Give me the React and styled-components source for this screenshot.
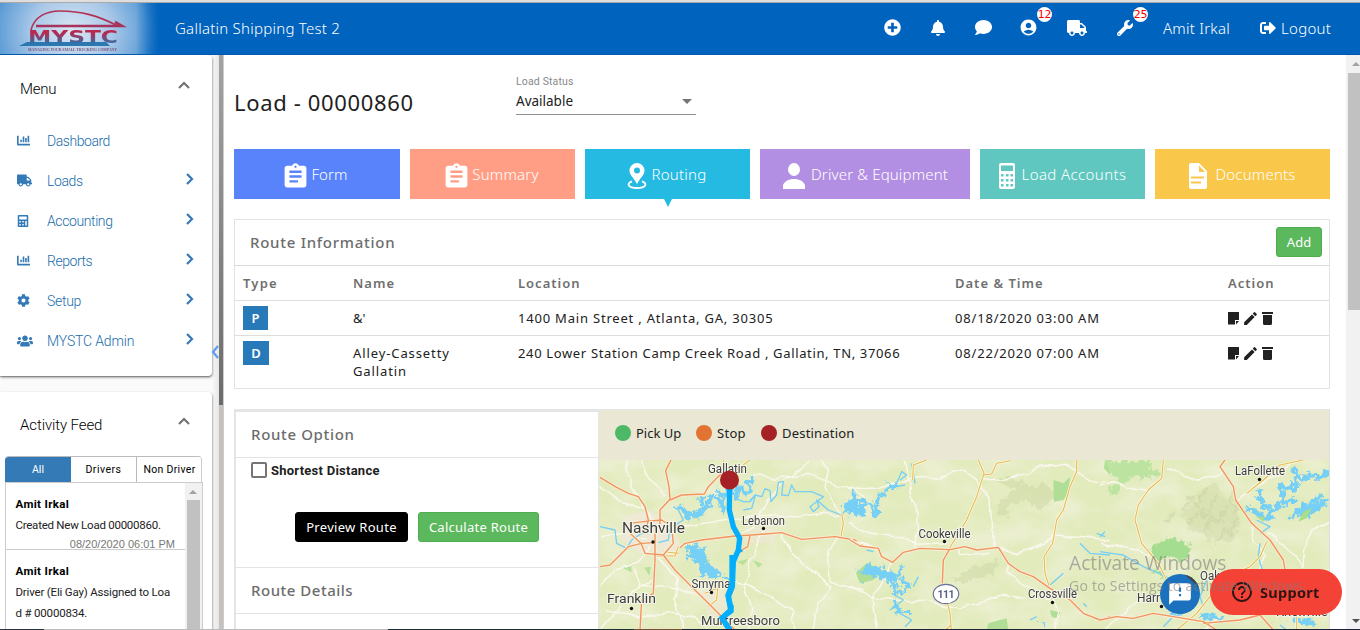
import React from 'react';
import styled, { createGlobalStyle } from 'styled-components';
import {
  FaPlusCircle, FaBell, FaComment, FaTruck, FaWrench, FaSignOutAlt,
  FaChartBar, FaCalculator, FaCog, FaUsers,
} from 'react-icons/fa';
import { MdAccountCircle, MdAssignment, MdEdit, MdFeedback, MdHelpOutline } from 'react-icons/md';

const Global = createGlobalStyle`
  * { box-sizing: border-box; }
  body { margin: 0; background: #fff; overflow: hidden; }
  button { margin: 0; padding: 0; font: inherit; }
`;
const ui = `'Noto Sans', 'DejaVu Sans', sans-serif`;
const side = `Roboto, 'Liberation Sans', sans-serif`;

const Page = styled.div`
  position: relative; width: 1360px; height: 630px; overflow: hidden;
  display: flex; flex-direction: column; background: #fff;
  font-family: ${ui}; color: #212121;
`;
const Label = styled.span`
  white-space: pre; letter-spacing: ${p => p.$ls || 0}px;
`;

/* header */
const TopEdge = styled.div`height: 3px; flex: none; background: #dedede; border-bottom: 1px solid #a9a9a9;`;
const Header = styled.header`
  height: 52px; flex: none; background: #0063bd; color: #fff;
  border-bottom: 1px solid #0058ab;
  display: flex; align-items: center; font-size: 15px; font-weight: 300; padding-bottom: 1px;
`;
const LogoBox = styled.div`
  width: 160px; height: 51px; flex: none; margin-bottom: -1px;
  background: radial-gradient(ellipse 100px 90px at 72px 28px, #d9e6f4 0%, #a9c8e8 40%, #5e9dd6 75%, #0063bd 100%);
  -webkit-mask-image: linear-gradient(90deg, #000 85%, transparent);
`;
const Company = styled.div`margin-left: 15px; width: 709px;`;
const HeadIcon = styled.div`
  position: relative; width: ${p => p.$w}px; height: 18px; display: flex; align-items: center; color: #fff;
  margin-left: ${p => p.$ml || 0}px; padding-bottom: 1px;
`;
const Badge = styled.span`
  position: absolute; left: ${p => p.$x}px; top: -12px; width: 15px; height: 15px; border-radius: 50%;
  background: #fff; color: #f00; font: 11px/15px 'DejaVu Sans', sans-serif;
  display: flex; justify-content: center; letter-spacing: -0.2px;
`;
const UserName = styled.div`width: 97px;`;
const Logout = styled.div`display: flex; align-items: center; gap: 5px;`;

/* body */
const Body = styled.div`display: flex; height: 575px; flex: none;`;
const Sidebar = styled.aside`
  width: 219px; display: flex; flex-direction: column; gap: 16px; background: linear-gradient(90deg, #fafafa 0 212px, #e6e6e6);
  font-family: ${side}; overflow: hidden; position: relative;
`;
const Card = styled.section`
  width: 212px; height: ${p => p.$h}px; flex: none; background: #fff; border-radius: 0 4px 4px 0;
  box-shadow: 0 1px 2px rgba(0,0,0,.5), 1px 2px 3px rgba(0,0,0,.15);
`;
const CardHead = styled.div`
  display: flex; justify-content: space-between; align-items: center; height: 66px; padding: 1px 22px ${p => p.$pb || 0}px 20px;
  font-size: 15px; font-weight: 300; color: #000;
`;
const Chevron = styled.svg`
  width: ${p => p.$w}px; height: ${p => p.$h}px; fill: none; stroke: ${p => p.$c}; stroke-width: ${p => p.$s || 2};
  margin-top: ${p => p.$mt || 0}px;
`;
const MenuItem = styled.div`
  display: flex; align-items: center; height: 40px; padding: 0 18px 1px 17px; color: #337ab7; font-size: 14px;
`;
const MenuIcon = styled.span`width: 30px; display: flex; font-size: ${p => p.$s}px;`;
const MenuText = styled.span`flex: 1; font-weight: 300; color: #206cab;`;
const SideThumb = styled.div`
  width: 5px; flex: none; border-right: 1px solid #ccc;
  background: linear-gradient(#a3a3a3, #6b6b6b 350px, #c4c1bf 350px);
`;
const Collapse = styled.div`position: absolute; left: 211px; top: 290px; height: 14px; display: flex;`;
const SegRow = styled.div`
  display: grid; grid-template-columns: 66px 66px 65px; margin: -2px 0 0 5px; width: 197px; height: 26px;
  border-radius: 4px 4px 0 0; border-top: 1px solid #bbb; border-right: 1px solid #ccc; overflow: hidden;
`;
const Seg = styled.div`
  display: flex; align-items: center; justify-content: center; font-size: 10.5px; color: ${p => (p.$on ? '#fff' : '#000')};
  background: ${p => (p.$on ? '#337ab7' : '#fff')}; border-right: ${p => (p.$bar ? '1px solid #bbb' : '0')};
`;
const Feed = styled.div`
  display: flex; margin-left: 5px; width: 198px; height: 150px; border: 1px solid #ccc; border-bottom: 0;
`;
const FeedList = styled.div`flex: 1;`;
const FeedEntry = styled.div`
  height: ${p => p.$h}px; border-bottom: 1px solid #ccc; padding: 11px 10px 0 9.5px; font-size: 11.5px; line-height: 21px; color: #222;
`;
const FeedName = styled.div`font-weight: 700; color: #000; font-size: 11.5px;`;
const FeedDate = styled.div`
  text-align: right; color: #777; font: 11px/17px 'Liberation Sans', sans-serif;
`;
const FeedBar = styled.div`
  width: 17px; padding-right: 1px; background: #f1f1f1; display: flex; flex-direction: column; align-items: center;
`;
const ArrowSlot = styled.div`height: ${p => p.$h}px; display: flex; align-items: center; justify-content: center;`;
const Triangle = styled.i`
  border: 4px solid transparent; border-top-width: ${p => (p.$down ? 4 : 0)}px; border-bottom-width: ${p => (p.$down ? 0 : 4)}px;
  border-${p => (p.$down ? 'top' : 'bottom')}-color: ${p => p.$c};
`;
const Thumb = styled.div`width: ${p => p.$w}px; height: ${p => p.$h}px; background: #c1c1c1;`;

const Main = styled.main`flex: 1; padding: 0 16px 0 10px; height: 575px; overflow: hidden;`;
const TitleRow = styled.div`display: flex; height: 94px;`;
const Title = styled.h1`margin: 31px 0 0; width: 282px; font-size: 22px; font-weight: 400; line-height: 32px;`;
const Select = styled.div`width: 180px; height: 60px; border-bottom: 1px solid #8f8f8f; padding-top: 20px;`;
const SelectLabel = styled.div`font: 10.5px/14px 'Roboto', sans-serif; color: #888;`;
const SelectValue = styled.div`
  display: flex; justify-content: space-between; align-items: center; padding-right: 4px; font-size: 13.5px; line-height: 24px;
`;
const Caret = styled.i`border: 5px solid transparent; border-top-color: #757575; border-bottom: 0;`;
const Tabs = styled.nav`
  display: grid; grid-template-columns: 166px 165px 165px 210px 165px 175px; gap: 10px; height: 50px;
`;
const Tab = styled.div`
  position: relative; background: ${p => p.$bg}; color: #fff; display: flex; justify-content: center; align-items: center;
  font-size: 15px; font-weight: 300; gap: ${p => p.$gap || 4}px; padding: 0 ${p => p.$pr || 0}px 0 0;
`;
const TabArrow = styled.i`
  position: absolute; top: 50px; left: 79px; border: 4px solid transparent; border-top: 8px solid #24bae2; border-bottom: 0;
`;
const TabIcon = styled.svg`width: ${p => p.$w}px; height: 26px; fill: #fff; margin-top: 4px;`;
const FormIcon = styled(MdAssignment)`width: 29px; height: 29px; margin: 4px -3px 0 0;`;

const Panel = styled.section`margin-top: 20px; border: 1px solid #e2e2e2; height: 170px;`;
const PanelHead = styled.div`
  height: ${p => p.$h}px; display: flex; align-items: center; justify-content: space-between;
  padding: 0 7px 2px 15px; border-bottom: 1px solid ${p => p.$line || '#d9d9d9'};
  font-size: 15px; font-weight: 500; color: #6d6d6d;
`;
const Button = styled.button`
  height: 30px; width: ${p => p.$w}px; border-radius: 3px; border: 1px solid ${p => (p.$dark ? '#000' : '#4cae4c')};
  background: ${p => (p.$dark ? '#000' : '#5cb85c')}; color: #fff; font: 400 13px ${ui};
`;
const Row = styled.div`
  display: grid; grid-template-columns: 110px 165px 437px 273px 1fr; padding: ${p => (p.$head ? 8 : 5)}px 8px 0;
  height: ${p => p.$h}px; border-bottom: ${p => (p.$last ? 0 : '1px solid #ddd')};
  font-size: 13px; line-height: ${p => (p.$head ? 18 : 24)}px; font-weight: ${p => (p.$head ? 600 : 400)};
  color: ${p => (p.$head ? '#6f6f6f' : '#212121')};
`;
const TypeMark = styled.span`
  display: flex; align-items: center; justify-content: center; width: ${p => p.$w}px; height: 24px;
  background: #2779b7; color: #fff; font-weight: 600; font-size: 13px;
`;
const Name = styled.div`line-height: 18px; padding-top: 3px;`;
const Actions = styled.div`display: flex; align-items: center; height: 25px; gap: 3px;`;
const Pencil = styled(MdEdit)`width: 17px; height: 17px; margin: 0 0 0 -1px;`;

const Lower = styled.section`display: flex; margin-top: 20px; height: 221px;`;
const Options = styled.div`width: 365px; border-top: 3px solid #e5e5e5; border-left: 2px solid #e5e5e5; border-right: 1px solid #e5e5e5;`;
const OptionBody = styled.div`height: 110px; border-bottom: 1px solid #e3e3e3; padding: 2px 15px 0;`;
const CheckRow = styled.div`display: flex; align-items: center; gap: 4px; height: 20px; font: 700 13px ${side};`;
const CheckBox = styled.span`width: 16px; height: 16px; border: 2px solid #757575; border-radius: 2px;`;
const ButtonRow = styled.div`display: flex; gap: 10px; margin: 32px 0 0 44px;`;
const MapPane = styled.div`width: 731px; border-right: 1px solid #ddd; border-top: 1px solid #e5e5e5;`;
const Legend = styled.div`
  height: 50px; background: #eae8d5; display: flex; align-items: center; padding: 0 0 4px 16px; font-size: 13px; 
`;
const LegendItem = styled.div`display: flex; align-items: center; gap: 5px; width: ${p => p.$w}px;`;
const Dot = styled.i`width: 16px; height: 16px; border-radius: 50%; background: ${p => p.$c};`;
const MapSvg = styled.svg`display: block; width: 730px; height: 170px;`;
const PageBar = styled.div`
  width: 14px; background: #f1f1f1; display: flex; flex-direction: column; align-items: flex-end; justify-content: flex-start;
`;
const PageBarGap = styled.div`flex: 1;`;

/* floating parts */
const ChatButton = styled.div`
  position: absolute; left: 1160px; top: 574px; width: 40px; height: 40px; border-radius: 50%;
  background: #1b71bd; color: #fff; display: flex; align-items: center; justify-content: center; font-size: 26px; overflow: hidden;
`;
const ChatRibbon = styled.i`
  position: absolute; left: 21px; top: 1px; width: 24px; height: 6px; background: #444; transform: rotate(42deg);
`;
const Support = styled.div`
  position: absolute; left: 1210px; top: 569px; width: 132px; height: 46px; border-radius: 23px; background: #f44336;
  color: #301413; display: flex; align-items: center; padding-left: 20px; gap: 6px; font-size: 14.5px; font-weight: 700;
`;
const Watermark = styled.div`
  position: absolute; left: 1069px; top: 549px; color: rgba(125,125,125,.6); font-family: 'Open Sans', sans-serif;
  font-size: 14px; line-height: 20px; white-space: nowrap;
`;
const WatermarkTitle = styled.div`font-size: 19.2px; line-height: 27px;`;
const BottomEdge = styled.div`
  position: absolute; left: 0; top: 629px; width: 1360px; height: 1px;
  background: linear-gradient(90deg, #2b3540 44px, #bbb 44px 388px, #1b2f35 388px 634px, #77503a 634px 682px, #1c2338 682px);
`;

const Logo = () => (
  <svg width="135" height="51" viewBox="0 3 135 51">
    <path d="M31 30C34 17 46 11 60 11C82 11 98 16 116 25" fill="none" stroke="#b03355" strokeWidth="1.6" />
    <path d="M36 26H122L115 22" fill="none" stroke="#a5335b" strokeWidth="2.6" />
    <path d="M19 46L27 42H106L110 46H19Z" fill="#2a78ad" />
    <text x="28" y="43" fontFamily="DejaVu Sans" fontWeight="700" fontSize="18" textLength="90" lengthAdjust="spacingAndGlyphs" fill="url(#lg)">MYSTC</text>
    <text x="28" y="51" fontFamily="Liberation Serif" fontWeight="700" fontSize="4.5" textLength="89" lengthAdjust="spacingAndGlyphs" fill="#7a5074">MANAGING YOUR SMALL TRUCKING COMPANY</text>
    <defs><linearGradient id="lg" x1="0" y1="0" x2="0" y2="1"><stop offset=".35" stopColor="#b52b50" /><stop offset=".85" stopColor="#2b72ab" /></linearGradient></defs>
  </svg>
);

const Up = () => (
  <Chevron $w={12} $h={8} $c="#6f6f6f" $mt={-8} viewBox="0 0 12 8"><path d="M1 7L6 2L11 7" /></Chevron>
);
const menu = [
  ['Dashboard', FaChartBar, 13, false, -0.45],
  ['Loads', FaTruck, 15, true, -0.4],
  ['Accounting', FaCalculator, 12, true, -0.4],
  ['Reports', FaChartBar, 13, true, -0.45],
  ['Setup', FaCog, 13, true, -0.3],
  ['MYSTC Admin', FaUsers, 16, true, -0.15],
];
const MenuCard = () => (
  <Card $h={321}>
    <CardHead><Label $ls={-0.25}>Menu</Label><Up /></CardHead>
    {menu.map(([t, Icon, s, more, ls]) => (
      <MenuItem key={t}>
        <MenuIcon $s={s}><Icon /></MenuIcon>
        <MenuText><Label $ls={ls}>{t}</Label></MenuText>
        {more && <Chevron $w={8} $h={12} $c="#337ab7" $s={2.2} $mt={-4} viewBox="0 0 8 12"><path d="M1 1L6 6L1 11" /></Chevron>}
      </MenuItem>
    ))}
  </Card>
);
const ActivityCard = () => (
  <Card $h={260}>
    <CardHead $pb={2}><Label $ls={-0.1}>Activity Feed</Label><Up /></CardHead>
    <SegRow>
      <Seg $on>All</Seg><Seg $bar><Label $ls={0.5}>Drivers</Label></Seg><Seg><Label $ls={0.3}>Non Driver</Label></Seg>
    </SegRow>
    <Feed>
      <FeedList>
        <FeedEntry $h={67}>
          <FeedName><Label $ls={0.35}>Amit Irkal</Label></FeedName>
          <div><Label $ls={-0.25}>Created New Load 00000860.</Label></div>
          <FeedDate>08/20/2020 06:01 PM</FeedDate>
        </FeedEntry>
        <FeedEntry $h={90}>
          <FeedName><Label $ls={0.35}>Amit Irkal</Label></FeedName>
          <Label $ls={-0.18}>{'Driver (Eli Gay) Assigned to Loa\nd # 00000834.'}</Label>
        </FeedEntry>
      </FeedList>
      <FeedBar><ArrowSlot $h={17}><Triangle $c="#a3a3a3" /></ArrowSlot><Thumb $w={13} $h={130} /></FeedBar>
    </Feed>
  </Card>
);

const PinIcon = () => (
  <TabIcon $w={20} viewBox="0 0 20 26"><path fillRule="evenodd" d="M10 0A7.5 7.5 0 0 0 2.5 7.5C2.5 12 7 15 10 21C13 15 17.5 12 17.5 7.5A7.5 7.5 0 0 0 10 0ZM10 4.5A3 3 0 1 1 10 10.5A3 3 0 0 1 10 4.5Z" /><path d="M5 18.3C-1 20.5 1 25 10 25S21 20.5 15 18.3" fill="none" stroke="#fff" strokeWidth="1.8" /></TabIcon>
);
const PersonIcon = () => (
  <TabIcon $w={26} viewBox="0 0 26 26"><ellipse cx="13" cy="6.5" rx="6" ry="6.5" /><path d="M2 26V22C4 17.5 9 16 13 16S22 17.5 24 22V26Z" /></TabIcon>
);
const CalcIcon = () => (
  <TabIcon $w={17} viewBox="0 0 17 26"><path fillRule="evenodd" d="M2 0H14A2 2 0 0 1 16 2V24A2 2 0 0 1 14 26H2A2 2 0 0 1 0 24V2A2 2 0 0 1 2 0ZM2 2.5V8H14V2.5ZM2 11V13.5H4.5V11ZM7 11V13.5H9.5V11ZM11.5 11V13.5H14V11ZM2 16V18.5H4.5V16ZM7 16V18.5H9.5V16ZM11.5 16V18.5H14V16ZM2 21V23.5H4.5V21ZM7 21V23.5H9.5V21ZM11.5 21V23.5H14V21Z" /></TabIcon>
);
const DocIcon = () => (
  <TabIcon $w={20} viewBox="0 0 20 26"><path fillRule="evenodd" d="M3 0H10L18 8V24A2 2 0 0 1 16 26H2A2 2 0 0 1 0 24V2A2 2 0 0 1 2 0ZM10 2.500V9H16ZM2 13.500V15.500H15V13.500ZM2 18.500V20.500H12V18.500Z" /></TabIcon>
);
const NoteIcon = () => (
  <svg width="12" height="13" viewBox="0 0 12 13" fill="#212121"><path d="M0 0H11V8H7V12.5H0Z" /><path d="M8 9H11L8 12.5Z" /></svg>
);
const TrashIcon = () => (
  <svg width="11" height="13" viewBox="0 0 11 13" fill="#212121"><path d="M0 0H11V2H0ZM1 3H10V11.5A1.5 1.5 0 0 1 8.5 13H2.5A1.5 1.5 0 0 1 1 11.5Z" /></svg>
);
const RowActions = () => (<Actions><NoteIcon /><Pencil /><TrashIcon /></Actions>);

const Roads = ({ c, w, d, o }) => (
  <g fill="none" stroke={c} strokeWidth={w} opacity={o || 1} strokeLinejoin="round">{d.map((x, i) => <path key={i} d={x} />)}</g>
);
const White = ({ d }) => <g filter="url(#wobble)"><Roads c="#faf7ee" w={4.5} d={d} /></g>;
const Yellow = ({ d }) => (<><Roads c="#fdf6dd" w={8} d={d} /><Roads c="#e3bb55" w={3.2} d={d} /></>);
const Orange = ({ d }) => (<><Roads c="#fbeedb" w={9} d={d} /><Roads c="#ee965c" w={4.2} d={d} /></>);
const Water = ({ d, w }) => <Roads c="#76cff4" w={w || 4} d={d} />;
const Lakes = styled.g.attrs({ filter: 'url(#shore)' })``;
const Place = ({ x, y, w, s, children, dot }) => (
  <>
    <text x={x} y={y} fontFamily="Roboto" fontSize={s || 12} textLength={w} lengthAdjust="spacingAndGlyphs"
      fill="#3d3d3d" stroke="#f5f5ea" strokeWidth="2" paintOrder="stroke">{children}</text>
    {dot && <circle cx={dot[0]} cy={dot[1]} r="1.7" fill="#111" />}
  </>
);
const West = () => (
  <g transform="translate(595 400) scale(.333333)">
    <path d="M90 350L160 330L230 370L260 440L210 470L130 460L80 420Z" fill="#f0e8da" opacity=".8" />
    <path d="M320 570L380 560L400 640L340 660Z M450 380H540V430H450Z" fill="#f0e8da" opacity=".6" />
    <path d="M85 505L108 488L110 517Z M148 503L168 500L163 527Z M322 475L345 480L335 495Z M425 485L460 477L445 495Z M474 480L502 492L490 503Z" fill="#b7e09a" />
    <White d={[
      'M15 260L70 300L150 330', 'M90 180L110 260L140 320L170 360', 'M135 180L160 230L215 290', 'M470 225L540 235L640 220L700 245L810 290',
      'M640 180L560 250L520 300L480 370L440 400', 'M505 390L490 430L465 480L450 560L470 620L460 690', 'M560 400L590 460L640 500L705 560L670 610L650 690',
      'M705 550L760 560L810 570', 'M20 690L60 640L100 590L170 540', 'M20 410L80 400L160 420', 'M170 440L130 490L60 510L15 560',
      'M180 470L250 530L240 600L270 690', 'M260 380L330 370L440 355L520 345L600 350L690 340L740 350', 'M680 180L700 210L690 260L740 340',
      'M330 690L300 650L230 640L150 650L40 630', 'M410 540L470 560L590 630L600 690', 'M740 410L700 450L705 550', 'M120 500L140 560L220 560L320 590']} />
    <Lakes>
      <Water w={13} d={['M255 315L275 345L290 355L297 335L308 350L320 320L335 325L345 300L360 290L375 300L383 330L390 290L365 270',
        'M390 290L410 265L425 295L432 265L450 280L470 270L455 250L475 235', 'M280 345L258 318M318 298L330 320M335 285L350 318',
        'M745 315L765 340L760 308L785 325L800 340L798 300L810 305M775 275L785 350']} />
      <path d="M275 432L293 438L298 427L305 445L330 435L322 460L340 475L332 490L365 505L380 528L415 538L400 550L375 530L350 535L335 520L310 530L315 500L290 480L276 475L285 455Z M785 520L800 500L810 510V550L790 540Z" fill="#76cff4" />
    </Lakes>
    <Water w={4} d={['M420 295L445 305L465 305L480 285L500 290L510 266L525 272L528 305L545 285L550 248L565 244L560 285L580 287L590 255L600 275L650 275L685 290L665 305L645 320L655 335L672 320L665 300L700 330L740 345L760 320',
      'M15 380L60 390L65 430L95 445L110 420L140 400L165 385', 'M190 428L220 420L225 385L265 360L250 330L235 320', 'M445 330L470 325L480 290L465 300']} />
    <Yellow d={['M385 180L390 205M465 180L430 205L410 230', 'M740 340L745 370L738 410', 'M175 468L240 468L250 440M205 455L250 460', 'M340 620L365 600L368 565L330 580']} />
    <Orange d={['M15 232L65 262L100 280L130 290L150 320L160 360L150 400', 'M228 180L212 212L222 260L225 298L195 330L195 370L180 400L180 480L175 580L140 600L135 690',
      'M225 300L260 285L328 282L340 260L365 235L400 200', 'M15 500L45 495L100 440L140 430L175 428', 'M105 370L145 365L200 360L230 380L235 430L205 465L150 460L138 430L105 400Z',
      'M255 443L270 430L320 420L420 408L470 405L560 398L620 418L720 410L780 420L810 440', 'M205 465L240 510L290 560L340 610L390 660L420 690', 'M465 408L458 440L440 450']} />
    <path d="M404 245L403 330L415 380L434 415L430 450L415 485L412 560L400 590L407 630L380 655L392 672L405 690" fill="none" stroke="#05aefc" strokeWidth="16" strokeLinejoin="round" />
    <path d="M428 440L445 453L428 462Z" fill="#05aefc" />
  </g>
);
const Middle = () => (
  <g transform="translate(850 400) scale(.333333)">
    <g filter="url(#shore)"><path d="M430 240L480 230L540 260L590 250L620 290L570 330L530 300L480 310L470 350L440 340L450 300L500 270Z M300 540L370 500L450 480L430 520L350 550Z" fill="#d0daa8" opacity=".6" /></g>
    <path d="M610 240L640 250L660 230L655 280L640 300L612 305Z M18 520L50 490L95 510L70 540L30 550Z M415 670L470 655L475 690H410Z M600 630L632 638L620 655L605 650Z M765 180H780V225L762 205Z" fill="#b0de96" />
    <White d={['M0 265L90 265L185 235L270 230L330 210L385 245L420 290L425 390L440 440L490 460L540 450L610 405L700 410L780 420',
      'M165 180L180 240L175 280L205 340L200 420L195 450', 'M400 240L490 235L560 205L640 190L720 240L780 250', 'M0 365L60 400L140 410L210 430L290 425',
      'M0 560L60 590L140 600L240 605L330 625L400 605L460 585L530 600', 'M130 485L90 560L65 590L80 690', 'M320 450L330 470L420 460M480 490L470 520L530 560L600 600', 'M610 600L625 640L615 690', 'M0 420L60 440L90 460']} />
    <Lakes>
      <Water w={11} d={['M0 335L10 300L40 345L35 315L65 310L72 350L85 335L80 290L105 280L120 250L140 265', 'M40 500L75 520L90 515L110 530L125 545L155 500M125 540L140 580L180 560L150 530M60 490L55 530M25 515L60 525L100 500M130 600L145 635L180 640']} />
      <Water w={30} d={['M40 510L100 520L125 540']} />
      <path d="M567 665L590 668L580 680Z" fill="#76cff4" />
    </Lakes>
    <Water w={4} d={['M140 250L155 215L170 225L150 240M185 190L195 250M110 265L165 255', 'M190 560L205 530M130 600L150 640L185 660L165 680M120 630L160 600L125 580', 'M50 450L70 455', 'M540 660L560 650M600 555L640 520', 'M690 430L720 460L780 465M740 400L765 410M710 620L700 610']} />
    <Yellow d={['M230 180L190 195L188 240', 'M385 180L402 220L380 290L350 360L320 410L298 445', 'M400 225L425 222L440 190L480 182', 'M680 180V215L660 260L640 330L620 360L608 430L582 470L585 520L598 560', 'M290 600L300 640L304 690M285 690L304 675']} />
    <Orange d={['M0 420L30 438L85 445L95 470L128 487L160 457L210 445L300 449L345 440L380 450L445 442L475 490L510 515L550 530L600 565L660 600L700 640L750 660L780 650', 'M298 449L280 480L277 550']} />
  </g>
);
const East = () => (
  <g transform="translate(1100 400) scale(.333333)">
    <g filter="url(#shore)">
      <path d="M10 183H150L155 210L180 208L178 230L150 235L100 225L60 260L50 285L20 280L60 235L30 220Z" fill="#bde3a1" />
      <path d="M240 340L280 310L310 260L350 250L370 290L410 310L420 370L400 420L350 430L310 400L270 390Z" fill="#d3dcae" opacity=".6" />
      <path d="M250 330l25 -35l15 20l30 -50M265 370l40 -45l10 25l35 -60M310 400l25 -50l20 20l25 -55M190 370l40 -40M350 430l25 -40l15 10l20 -50M390 280l20 60" fill="none" stroke="#c8d2a0" strokeWidth="9" opacity=".55" />
      <path d="M150 445L180 420L220 415L280 440L270 465L240 485L210 470L170 480Z M160 510L190 505L188 535Z" fill="#a5dd90" />
    </g>
    <White d={['M0 255L40 245L90 265L150 275M200 210L240 215L290 240L340 235L370 220', 'M688 360L640 390L620 430L612 500', 'M455 370L465 430L490 460L480 510', 'M415 300L440 280L520 230L600 183', 'M0 430L60 440L110 450L150 470', 'M500 400L560 440L610 500', 'M20 690L70 640L140 590M310 690L350 650']} />
    <Lakes>
      <Water w={13} d={['M440 320L470 335L490 355L515 350L510 325L485 310L475 270M510 350L530 320L550 300L540 255L580 270L590 240L580 200M590 240L630 225L670 230L685 210M550 310L585 300M560 265L600 255', 'M570 355L600 330L640 325L680 300L620 350M610 320L670 285', 'M210 640L245 645M300 650L370 655M570 660L640 670']} />
      <Water w={22} d={['M595 340L680 305']} />
    </Lakes>
    <Water w={4} d={['M470 360L510 380L480 400M480 430L475 470L490 520', 'M0 455L70 465L130 500L200 530L210 580', 'M0 410L15 395M320 540L300 590L310 620M215 655L190 680M540 675L560 690']} />
    <path d="M595 365L610 335L635 325L620 355Z M470 350L495 350L490 365Z" fill="#a9dc8b" />
    <Yellow d={['M190 180L185 235L145 270L115 315L105 360L125 430L175 490L205 550L200 600', 'M610 180L540 195L490 240L440 280', 'M500 425L480 470L450 500L360 540L330 590L290 640L230 690', 'M590 650V690']} />
    <Orange d={['M375 180L360 200L400 260L407 300L455 370L510 420L550 480L555 510', 'M0 660L50 650L100 655L160 640L220 650L310 665L350 690M310 670L420 660L480 645L520 690']} />
  </g>
);
const RouteMap = () => (
  <MapSvg viewBox="599 460 730 170">
    <defs>
      <filter id="terrain" x="0" y="0" width="1" height="1">
        <feTurbulence type="fractalNoise" baseFrequency=".025 .04" numOctaves="3" seed="8" />
        <feColorMatrix values="0 0 0 0 .93  0 0 0 0 .91  0 0 0 0 .82  2.5 0 0 0 -1" />
      </filter>
      <filter id="shore" x="-.1" y="-.1" width="1.2" height="1.2" colorInterpolationFilters="sRGB">
        <feTurbulence type="fractalNoise" baseFrequency=".06" numOctaves="3" seed="3" />
        <feDisplacementMap in="SourceGraphic" scale="34" xChannelSelector="R" yChannelSelector="G" />
      </filter>
      <filter id="wobble" x="-.1" y="-.1" width="1.2" height="1.2" colorInterpolationFilters="sRGB">
        <feTurbulence type="fractalNoise" baseFrequency=".02" numOctaves="2" seed="5" />
        <feDisplacementMap in="SourceGraphic" scale="24" xChannelSelector="R" yChannelSelector="G" />
      </filter>
    </defs>
    <rect x="599" y="460" width="730" height="170" fill="#e2ebbc" />
    <rect x="599" y="460" width="730" height="170" filter="url(#terrain)" opacity=".45" />
    <West /><Middle /><East />
    <Place x="708" y="473" w="39">Gallatin</Place>
    <circle cx="729.5" cy="480" r="9.5" fill="#a52126" />
    <Place x="622" y="533" w="63" s="15" dot={[653, 542]}>Nashville</Place>
    <Place x="742" y="524.5" w="43" dot={[763.5, 528.5]}>Lebanon</Place>
    <Place x="691.5" y="588" w="39" dot={[711.5, 592.5]}>Smyrna</Place>
    <Place x="607" y="602.5" w="49" s="13" dot={[631.5, 608.5]}>Franklin</Place>
    <Place x="701" y="625" w="79" s="13">Murfreesboro</Place>
    <Place x="918.5" y="537.5" w="52" dot={[944.5, 541.5]}>Cookeville</Place>
    <Place x="1028" y="597.5" w="49" dot={[1052.5, 602.5]}>Crossville</Place>
    <Place x="1235" y="474.5" w="50" dot={[1259.5, 479.5]}>LaFollette</Place>
    <Place x="1137" y="602" w="23" dot={[1161.5, 606.5]}>Harr</Place>
    <Place x="1200" y="580" w="20">Oak</Place>
    <Place x="1276" y="616" w="52" s="13">Knoxville</Place>
    <path d="M732 555V585L728 595L731 608" fill="none" stroke="#05aefc" strokeWidth="5.3" />
    <path d="M731 605V611L722 618L726 624L730 630" fill="none" stroke="#05aefc" strokeWidth="5.3" />
    <ellipse cx="946" cy="594" rx="12.7" ry="9.7" fill="#fff" stroke="#6a7399" strokeWidth="1.2" />
    <text x="937.5" y="598" fontFamily="Roboto" fontWeight="700" fontSize="10.5" textLength="17" fill="#596189">111</text>
  </MapSvg>
);

const App = () => (
  <Page>
    <Global />
    <TopEdge />
    <Header>
      <LogoBox><Logo /></LogoBox>
      <Company><Label $ls={0.25}>Gallatin Shipping Test 2</Label></Company>
      <HeadIcon $w={46}><FaPlusCircle size={17} /></HeadIcon>
      <HeadIcon $w={45}><FaBell size={16} /></HeadIcon>
      <HeadIcon $w={45}><FaComment size={17} /></HeadIcon>
      <HeadIcon $w={48} $ml={-1}><MdAccountCircle size={19} /><Badge $x={18}>12</Badge></HeadIcon>
      <HeadIcon $w={50}><FaTruck size={20} /></HeadIcon>
      <HeadIcon $w={46}><FaWrench size={16} /><Badge $x={16}>25</Badge></HeadIcon>
      <UserName><Label $ls={0.25}>Amit Irkal</Label></UserName>
      <Logout><FaSignOutAlt size={16} /><Label $ls={0.3}>Logout</Label></Logout>
    </Header>
    <Body>
      <Sidebar>
        <MenuCard />
        <ActivityCard />
        <Collapse><Chevron $w={8} $h={14} $c="#5b9cf0" $s={2.2} viewBox="0 0 8 14"><path d="M7 1L2 7L7 13" /></Chevron></Collapse>
      </Sidebar>
      <SideThumb />
      <Main>
        <TitleRow>
          <Title><Label $ls={0.65}>Load - 00000860</Label></Title>
          <Select>
            <SelectLabel><Label $ls={0.15}>Load Status</Label></SelectLabel>
            <SelectValue><Label>Available</Label><Caret /></SelectValue>
          </Select>
        </TitleRow>
        <Tabs>
          <Tab $bg="#5983fb" $pr={5}><FormIcon /><Label $ls={0.1}>Form</Label></Tab>
          <Tab $bg="#ff9e85" $pr={4}><FormIcon /><Label $ls={0.2}>Summary</Label></Tab>
          <Tab $bg="#24bae2" $pr={1}><PinIcon /><Label $ls={0.25}>Routing</Label><TabArrow /></Tab>
          <Tab $bg="#b38fe3" $pr={1}><PersonIcon /><Label $ls={0.15}>Driver &amp; Equipment</Label></Tab>
          <Tab $bg="#5fc7c0" $gap={6}><CalcIcon /><Label $ls={0.4}>Load Accounts</Label></Tab>
          <Tab $bg="#f9c74a" $gap={6}><DocIcon /><Label $ls={0.2}>Documents</Label></Tab>
        </Tabs>
        <Panel>
          <PanelHead $h={46}><Label $ls={0.72}>Route Information</Label><Button $w={46}>Add</Button></PanelHead>
          <Row $head $h={35}>
            <Label $ls={1.2}>Type</Label><Label $ls={1}>Name</Label><Label $ls={1}>Location</Label><Label $ls={1}>Date &amp; Time</Label><Label $ls={1}>Action</Label>
          </Row>
          <Row $h={35}>
            <TypeMark $w={25}>P</TypeMark><Name><Label>&amp;'</Label></Name><Label $ls={0.8}>1400 Main Street , Atlanta, GA, 30305</Label>
            <Label $ls={0.82}>08/18/2020 03:00 AM</Label><RowActions />
          </Row>
          <Row $h={52} $last>
            <TypeMark $w={26}>D</TypeMark><Name><Label $ls={0.9}>{'Alley-Cassetty\nGallatin'}</Label></Name><Label $ls={0.65}>240 Lower Station Camp Creek Road , Gallatin, TN, 37066</Label>
            <Label $ls={0.82}>08/22/2020 07:00 AM</Label><RowActions />
          </Row>
        </Panel>
        <Lower>
          <Options>
            <PanelHead $h={46} $line="#e3e3e3"><Label $ls={0.65}>Route Option</Label></PanelHead>
            <OptionBody>
              <CheckRow><CheckBox /><Label $ls={0.25}>Shortest Distance</Label></CheckRow>
              <ButtonRow>
                <Button $dark $w={113}><Label $ls={0.3}>Preview Route</Label></Button>
                <Button $w={121}><Label $ls={0.27}>Calculate Route</Label></Button>
              </ButtonRow>
            </OptionBody>
            <PanelHead $h={46} $line="#e3e3e3"><Label $ls={0.5}>Route Details</Label></PanelHead>
          </Options>
          <MapPane>
            <Legend>
              <LegendItem $w={81}><Dot $c="#4db865" /><Label $ls={0}>Pick Up</Label></LegendItem>
              <LegendItem $w={65}><Dot $c="#e37333" /><Label $ls={0.3}>Stop</Label></LegendItem>
              <LegendItem $w={110}><Dot $c="#a52126" /><Label $ls={0.2}>Destination</Label></LegendItem>
            </Legend>
            <RouteMap />
          </MapPane>
        </Lower>
      </Main>
      <PageBar>
        <ArrowSlot $h={18}><Triangle $c="#a3a3a3" /></ArrowSlot>
        <Thumb $w={12} $h={237} />
        <PageBarGap />
        <ArrowSlot $h={19}><Triangle $down $c="#505050" /></ArrowSlot>
      </PageBar>
    </Body>
    <ChatButton><MdFeedback /><ChatRibbon /></ChatButton>
    <Support><MdHelpOutline size={24} /><Label $ls={0.3}>Support</Label></Support>
    <Watermark>
      <WatermarkTitle>Activate Windows</WatermarkTitle>
      <Label $ls={0.25}>Go to Settings to activate Windows.</Label>
    </Watermark>
    <BottomEdge />
  </Page>
);
export default App;
